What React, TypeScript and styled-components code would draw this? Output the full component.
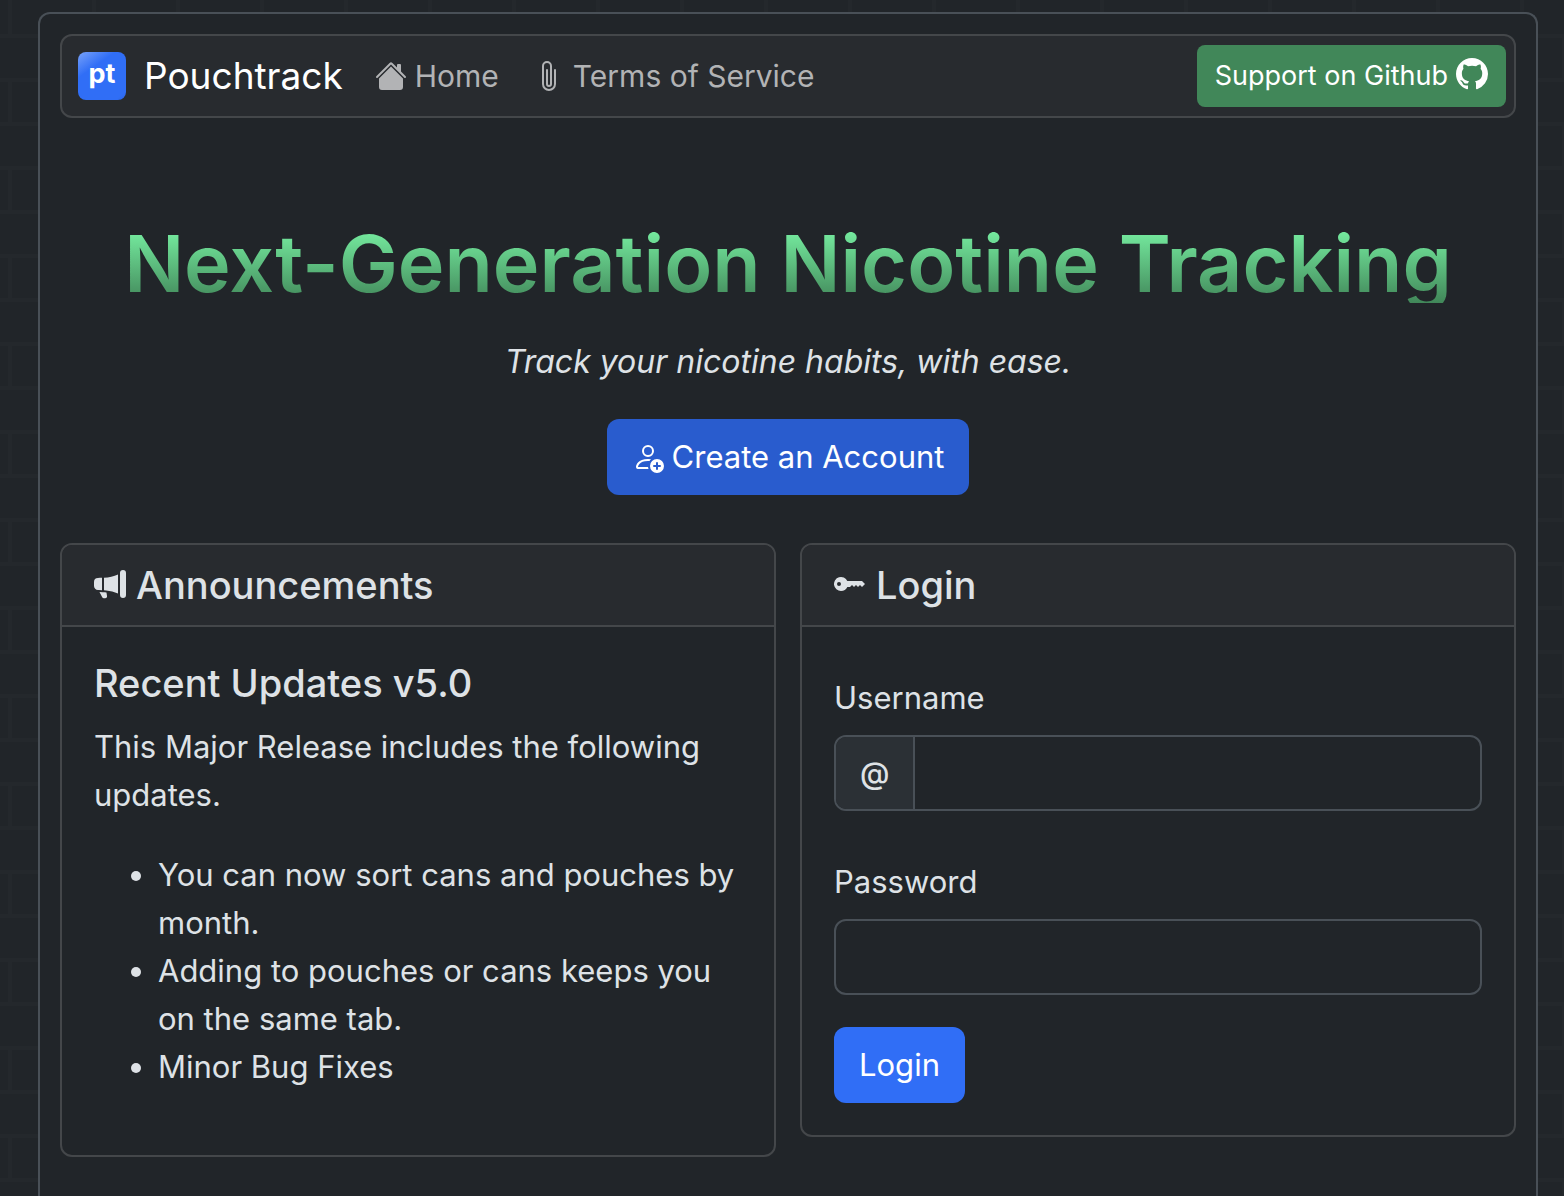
import React from "react";
import styled, { createGlobalStyle } from "styled-components";
import {
  BsGithub,
  BsHouseFill,
  BsKeyFill,
  BsMegaphoneFill,
  BsPaperclip,
  BsPersonAdd,
} from "react-icons/bs";

const color = {
  body: "#212529",
  text: "#dee2e6",
  raised: "#282b2f",
  line: "#44474a",
  strongLine: "#495057",
  addon: "#2b3035",
  primary: "#306ef6",
  primaryDeep: "#295cce",
  success: "#418759",
};

const brick =
  "url(\"data:image/svg+xml,%3Csvg xmlns='http://www.w3.org/2000/svg' width='84' height='88' viewBox='0 0 42 44'%3E%3Cpath d='M0 0h42v44H0V0zm1 1h40v20H1V1zM0 23h20v20H0V23zm22 0h20v20H22V23z' fill='%23ffffff' fill-opacity='.015' fill-rule='evenodd'/%3E%3C/svg%3E\")";

const GlobalStyle = createGlobalStyle`
  *, *::before, *::after { box-sizing: border-box; }
  body {
    margin: 0;
    background: ${color.body} ${brick} 10px 80px;
    color: ${color.text};
    font: 400 31px/48px Inter, "Liberation Sans", sans-serif;
  }
  h1, h2, h3, p, ul { margin: 0; }
`;

const Page = styled.div`
  padding: 12px 26px 0 38px;
`;

const Shell = styled.div`
  min-height: calc(100vh - 12px);
  padding: 20px;
  border: 2px solid ${color.strongLine};
  border-bottom: 0;
  border-radius: 12px 12px 0 0;
  background: ${color.body};
`;

const Nav = styled.nav`
  display: flex;
  align-items: center;
  height: 84px;
  padding: 0 8px 0 16px;
  border: 2px solid ${color.line};
  border-radius: 12px;
  background: ${color.raised};
`;

const Brand = styled.a`
  display: flex;
  align-items: center;
  gap: 18px;
  margin-right: 32px;
  color: #fff;
  font-size: 37px;
  text-decoration: none;
`;

const Logo = styled.span`
  width: 48px;
  height: 48px;
  border-radius: 8px;
  background: linear-gradient(145deg, #78a2f9 0%, ${color.primary} 32%, ${color.primary} 90%, #2c64e2 100%);
  font-size: 27px;
  font-weight: 700;
  line-height: 44px;
  text-align: center;
`;

const NavLink = styled.a`
  display: flex;
  align-items: center;
  gap: 8px;
  margin-right: 34px;
  color: #b2b3b5;
  font-size: 30px;
  text-decoration: none;
  svg { width: 32px; height: 32px; }
`;

const GithubLink = styled.a`
  display: flex;
  align-items: center;
  gap: 8px;
  height: 62px;
  margin-left: auto;
  padding: 0 18px;
  border-radius: 8px;
  background: ${color.success};
  color: #fff;
  font-size: 27px;
  text-decoration: none;
  svg { width: 32px; height: 32px; margin-bottom: 4px; }
`;

const Hero = styled.header`
  display: flex;
  flex-direction: column;
  align-items: center;
  padding: 97px 0 48px;
  text-align: center;
`;

const Title = styled.h1`
  padding-top: 8px;
  background: linear-gradient(#79f2a4 12%, ${color.success});
  background-clip: text;
  -webkit-background-clip: text;
  color: transparent;
  font-size: 79px;
  font-weight: 600;
  line-height: 80px;
`;

const Tagline = styled.p`
  margin: 32px 0 30px;
  font-size: 32px;
  font-style: italic;
  line-height: 54px;
`;

const Button = styled.button<{ $deep?: boolean }>`
  display: flex;
  align-items: center;
  gap: 8px;
  height: 76px;
  padding: 0 25px;
  border: 0;
  border-radius: 12px;
  background: ${(p) => (p.$deep ? color.primaryDeep : color.primary)};
  color: #fff;
  font: inherit;
  svg { width: 32px; height: 32px; }
`;

const Columns = styled.main`
  display: grid;
  grid-template-columns: 1fr 1fr;
  align-items: start;
  gap: 24px;
`;

const Card = styled.section`
  border: 2px solid ${color.line};
  border-radius: 12px;
  overflow: hidden;
`;

const CardHeader = styled.h2`
  display: flex;
  align-items: center;
  gap: 10px;
  padding: 16px 32px;
  border-bottom: 2px solid ${color.line};
  background: ${color.raised};
  font-size: 38px;
  font-weight: 500;
  line-height: 48px;
  svg { width: 32px; height: 32px; margin-bottom: 2px; }
`;

const CardBody = styled.div`
  padding: 32px;
`;

const Subtitle = styled.h3`
  margin-bottom: 16px;
  font-size: 38px;
  font-weight: 500;
  line-height: 48px;
`;

const Updates = styled.ul`
  margin: 32px 0;
  padding-left: 64px;
`;

const LoginForm = styled.form`
  display: flex;
  flex-direction: column;
  align-items: flex-start;
  gap: 32px;
`;

const Field = styled.div`
  width: 100%;
  padding-top: 15px;
`;

const Label = styled.label`
  display: block;
  margin-bottom: 13px;
`;

const InputGroup = styled.div`
  display: flex;
  height: 76px;
  border: 2px solid ${color.strongLine};
  border-radius: 12px;
  overflow: hidden;
`;

const Addon = styled.span`
  display: flex;
  align-items: center;
  padding: 0 24px;
  border-right: 2px solid ${color.strongLine};
  background: ${color.addon};
  font-size: 30px;
  font-weight: 500;
`;

const Input = styled.input`
  flex: 1;
  min-width: 0;
  padding: 0 24px;
  border: 0;
  outline: 0;
  background: transparent;
  color: inherit;
  font: inherit;
`;

const updates = [
  "You can now sort cans and pouches by month.",
  "Adding to pouches or cans keeps you on the same tab.",
  "Minor Bug Fixes",
];

export default function App() {
  return (
    <>
      <GlobalStyle />
      <Page>
        <Shell>
          <Nav>
            <Brand href="#">
              <Logo>pt</Logo>
              Pouchtrack
            </Brand>
            <NavLink href="#"><BsHouseFill />Home</NavLink>
            <NavLink href="#"><BsPaperclip />Terms of Service</NavLink>
            <GithubLink href="#">Support on Github<BsGithub /></GithubLink>
          </Nav>
          <Hero>
            <Title>Next-Generation Nicotine Tracking</Title>
            <Tagline>Track your nicotine habits, with ease.</Tagline>
            <Button $deep type="button"><BsPersonAdd />Create an Account</Button>
          </Hero>
          <Columns>
            <Card>
              <CardHeader><BsMegaphoneFill />Announcements</CardHeader>
              <CardBody>
                <Subtitle>Recent Updates v5.0</Subtitle>
                <p>This Major Release includes the following updates.</p>
                <Updates>
                  {updates.map((item) => <li key={item}>{item}</li>)}
                </Updates>
              </CardBody>
            </Card>
            <Card>
              <CardHeader><BsKeyFill />Login</CardHeader>
              <CardBody>
                <LoginForm onSubmit={(e: React.FormEvent) => e.preventDefault()}>
                  <Field>
                    <Label htmlFor="username">Username</Label>
                    <InputGroup>
                      <Addon>@</Addon>
                      <Input id="username" type="text" />
                    </InputGroup>
                  </Field>
                  <Field>
                    <Label htmlFor="password">Password</Label>
                    <InputGroup>
                      <Input id="password" type="password" />
                    </InputGroup>
                  </Field>
                  <Button type="submit">Login</Button>
                </LoginForm>
              </CardBody>
            </Card>
          </Columns>
        </Shell>
      </Page>
    </>
  );
}
